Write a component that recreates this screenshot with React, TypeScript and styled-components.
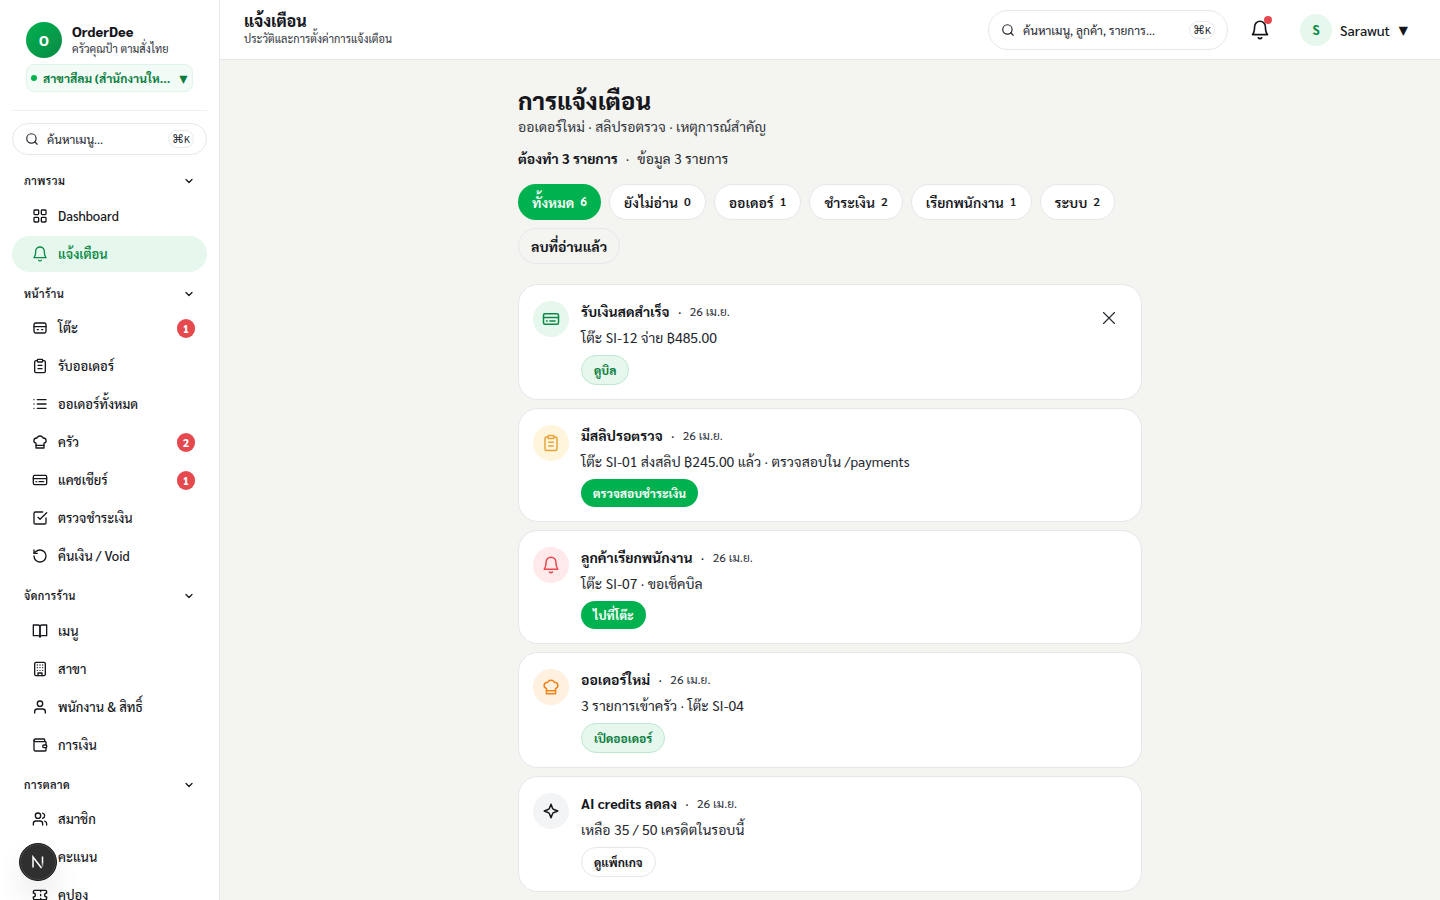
import React from "react";
import styled, { createGlobalStyle, css } from "styled-components";

const GlobalStyle = createGlobalStyle`
  *, *::before, *::after { box-sizing: border-box; }
  body {
    margin: 0;
    background: #f4f5f0;
    color: #15171c;
    font-family: Sarabun, "Noto Sans Thai Looped", "Noto Sans", sans-serif;
    font-size: 14px;
    overflow: hidden;
  }
  button { font: inherit; color: inherit; }
  h1, h2, p { margin: 0; }
`;

/* ---------- icons ---------- */

const iconPaths = {
  grid: (
    <>
      <rect x="3" y="3" width="7" height="7" rx="1.2" />
      <rect x="14" y="3" width="7" height="7" rx="1.2" />
      <rect x="14" y="14" width="7" height="7" rx="1.2" />
      <rect x="3" y="14" width="7" height="7" rx="1.2" />
    </>
  ),
  bell: (
    <>
      <path d="M5.500 8a6.500 6.500 0 0 1 13 0c0 6.500 2.500 9.500 2.500 9.500H3s2.500-3 2.500-9.500" />
      <path d="M10 21.300c.800 1.500 3.200 1.500 4 0" />
    </>
  ),
  table: (
    <>
      <rect x="3" y="4.5" width="18" height="15" rx="2.5" />
      <path d="M3 10h18M8 14.500h1.500M14.500 14.500H16" />
    </>
  ),
  clipboard: (
    <>
      <rect x="8" y="2" width="8" height="4" rx="1" />
      <path d="M16 4h2a2 2 0 0 1 2 2v14a2 2 0 0 1-2 2H6a2 2 0 0 1-2-2V6a2 2 0 0 1 2-2h2M9 11h6M9 16h6" />
    </>
  ),
  list: <path d="M8 5.500h13M8 12h13M8 18.500h13M3 5.500h.01M3 12h.01M3 18.500h.01" />,
  chef: (
    <>
      <path d="M6 13.870A4 4 0 0 1 7.410 6a5.110 5.110 0 0 1 1.050-1.540 5 5 0 0 1 7.080 0A5.110 5.110 0 0 1 16.590 6 4 4 0 0 1 18 13.870V21H6Z" />
      <path d="M6 17h12" />
    </>
  ),
  card: (
    <>
      <rect x="2" y="5" width="20" height="14" rx="2" />
      <path d="M2 10h20M6 14.500h1M10.500 14.500h7" />
    </>
  ),
  check: (
    <>
      <path d="m9 11 3 3L22 4" />
      <path d="M21 12v7a2 2 0 0 1-2 2H5a2 2 0 0 1-2-2V5a2 2 0 0 1 2-2h11" />
    </>
  ),
  undo: (
    <>
      <path d="M3 12a9 9 0 1 0 9-9 9.750 9.750 0 0 0-6.740 2.740L3 8" />
      <path d="M3 3v5h5" />
    </>
  ),
  book: (
    <>
      <path d="M2 3h7a3 3 0 0 1 3 3v15a3 3 0 0 0-3-2H2z" />
      <path d="M22 3h-7a3 3 0 0 0-3 3v15a3 3 0 0 1 3-2h7z" />
    </>
  ),
  building: (
    <>
      <rect x="4" y="2" width="16" height="20" rx="2" />
      <path d="M9 22v-4h6v4M8 6h.01M16 6h.01M12 6h.01M12 10h.01M12 14h.01M16 10h.01M16 14h.01M8 10h.01M8 14h.01" />
    </>
  ),
  user: (
    <>
      <path d="M20 21v-2a4 4 0 0 0-4-4H8a4 4 0 0 0-4 4v2" />
      <circle cx="12" cy="7" r="4" />
    </>
  ),
  wallet: (
    <>
      <path d="M19 7V4a1 1 0 0 0-1-1H5a2 2 0 0 0 0 4h15a1 1 0 0 1 1 1v4h-3a2 2 0 0 0 0 4h3a1 1 0 0 0 1-1v-2a1 1 0 0 0-1-1" />
      <path d="M3 5v14a2 2 0 0 0 2 2h15a1 1 0 0 0 1-1v-4" />
    </>
  ),
  users: (
    <>
      <path d="M16 21v-2a4 4 0 0 0-4-4H6a4 4 0 0 0-4 4v2M22 21v-2a4 4 0 0 0-3-3.870M16 3.130a4 4 0 0 1 0 7.750" />
      <circle cx="9" cy="7" r="4" />
    </>
  ),
  star: <path d="m12 2 3 6.500 6.500 1-4.800 4.600 1.200 6.700-5.900-3.200-5.900 3.200 1.200-6.700L2.500 9.500l6.500-1z" />,
  ticket: (
    <>
      <path d="M2 9a3 3 0 0 1 0 6v2a2 2 0 0 0 2 2h16a2 2 0 0 0 2-2v-2a3 3 0 0 1 0-6V7a2 2 0 0 0-2-2H4a2 2 0 0 0-2 2Z" />
      <path d="M13 5v2M13 17v2M13 11v2" />
    </>
  ),
  sparkle: (
    <path d="m12 3 1.900 5.100a3 3 0 0 0 2 2L21 12l-5.100 1.900a3 3 0 0 0-2 2L12 21l-1.900-5.100a3 3 0 0 0-2-2L3 12l5.100-1.900a3 3 0 0 0 2-2Z" />
  ),
  search: (
    <>
      <circle cx="11" cy="11" r="8" />
      <path d="m21 21-4.300-4.300" />
    </>
  ),
  chevron: <path d="m6 9 6 6 6-6" />,
  close: <path d="M18 6 6 18M6 6l12 12" />,
};

type IconName = keyof typeof iconPaths;

const IconSvg = styled.svg`
  display: block;
  flex: none;
  fill: none;
  stroke: currentColor;
  stroke-linecap: round;
  stroke-linejoin: round;
`;

function Icon({ name, size = 16, stroke = 2 }: { name: IconName; size?: number; stroke?: number }) {
  return (
    <IconSvg width={size} height={size} viewBox="0 0 24 24" strokeWidth={stroke} aria-hidden>
      {iconPaths[name]}
    </IconSvg>
  );
}

/* ---------- shell ---------- */

const Shell = styled.div`
  display: grid;
  grid-template-columns: 220px 1fr;
  height: 900px;
  overflow: hidden;
`;

const Sidebar = styled.aside`
  height: 900px;
  padding: 12px 12px 0;
  background: #fff;
  border-right: 1px solid #e5e7eb;
  overflow: hidden;
`;

const Brand = styled.div`
  padding: 10px 14px 18px;
  border-bottom: 1px solid #eff0f2;
`;

const BrandRow = styled.div`
  display: flex;
  align-items: center;
  gap: 10px;
`;

const BrandText = styled.div`
  padding-bottom: 2px;
`;

const Logo = styled.div`
  display: grid;
  place-items: center;
  width: 36px;
  height: 36px;
  border-radius: 50%;
  background: linear-gradient(135deg, #00b14f, #0a8a45);
  color: #fff;
  font-size: 14px;
  font-weight: 800;
`;

const BrandName = styled.div`
  font-size: 14px;
  font-weight: 800;
  line-height: 19px;
`;

const BrandSub = styled.div`
  font-size: 11px;
  line-height: 15px;
  color: #30343c;
`;

const Branch = styled.button`
  display: flex;
  align-items: center;
  width: 167px;
  height: 28px;
  margin-top: 6px;
  padding: 0 4px;
  border: 1px solid #e0f5e9;
  border-radius: 8px;
  background: #f2fbf6;
  color: #0a7d3e;
  font-size: 12px;
  font-weight: 700;
  white-space: nowrap;
`;

const BranchDot = styled.span`
  width: 6px;
  height: 6px;
  margin-right: 6px;
  border-radius: 50%;
  background: #00b14f;
`;

const BranchName = styled.span`
  flex: 1;
  text-align: left;
`;

const Caret = styled.span<{ $size: number }>`
  font-size: ${(p) => p.$size}px;
  font-weight: 400;
  line-height: 1;
`;

const SearchBox = styled.div<{ $top?: boolean }>`
  display: flex;
  align-items: center;
  gap: 8px;
  width: ${(p) => (p.$top ? "240px" : "100%")};
  height: ${(p) => (p.$top ? "40px" : "32px")};
  margin-top: ${(p) => (p.$top ? "0" : "12px")};
  padding: 0 12px;
  border: 1px solid #e5e7eb;
  border-radius: 20px;
  background: #fff;
  color: #24272e;
  font-size: 12px;
  white-space: nowrap;
`;

const SearchText = styled.span`
  flex: 1;
`;

const Keys = styled.kbd`
  display: inline-flex;
  align-items: center;
  justify-content: center;
  width: 26px;
  height: 18px;
  border: 1px solid #e8eaed;
  border-radius: 9px;
  font-family: inherit;
  font-size: 10px;
  line-height: 16px;
`;

const CommandGlyph = styled.span`
  font-family: "DejaVu Sans", sans-serif;
  font-size: 12px;
  line-height: 16px;
`;

const GroupHead = styled.div<{ $tall?: boolean }>`
  display: flex;
  align-items: center;
  justify-content: space-between;
  height: ${(p) => (p.$tall ? 39 : 38)}px;
  padding: ${(p) => (p.$tall ? 5 : 6)}px 12px 0;
  font-size: 11px;
  font-weight: 600;
  letter-spacing: 0.440px;
`;

const GroupTitle = styled.span`
  padding-bottom: 1px;
`;

const Groups = styled.div`
  margin-top: 4px;
`;

const NavList = styled.nav`
  display: flex;
  flex-direction: column;
  gap: 2px;
`;

const NavItem = styled.a<{ $active?: boolean }>`
  display: flex;
  align-items: center;
  gap: 10px;
  height: 36px;
  padding: 0 12px 0 20px;
  border-radius: 18px;
  font-size: 13px;
  font-weight: 500;
  ${(p) =>
    p.$active &&
    css`
      background: #e6f7ed;
      color: #0a8a45;
      font-weight: 600;
    `}
`;

const NavLabel = styled.span`
  flex: 1;
  padding-bottom: 1px;
`;

const Count = styled.span`
  display: grid;
  place-items: center;
  width: 18px;
  height: 19px;
  border-radius: 10px;
  background: #e5484d;
  color: #fff;
  font-size: 11px;
  font-weight: 800;
`;

/* ---------- top bar ---------- */

const Main = styled.div`
  min-width: 0;
`;

const TopBar = styled.header`
  display: flex;
  align-items: center;
  height: 60px;
  padding: 0 32px 0 24px;
  background: #fff;
  border-bottom: 1px solid #e5e7eb;
`;

const TopTitles = styled.div`
  flex: 1;
  padding-bottom: 2px;
`;

const TopTitle = styled.h2`
  font-size: 16px;
  font-weight: 800;
  line-height: 20px;
`;

const TopSub = styled.p`
  font-size: 11px;
  line-height: 16px;
  color: #30343c;
`;

const BellButton = styled.div`
  position: relative;
  display: grid;
  place-items: center;
  width: 40px;
  height: 40px;
  margin: 0 20px 0 12px;
`;

const BellDot = styled.span`
  position: absolute;
  top: 6px;
  right: 8px;
  width: 8px;
  height: 8px;
  border-radius: 50%;
  background: #e5484d;
`;

const Profile = styled.div`
  display: flex;
  align-items: center;
  gap: 8px;
  width: 108px;
  font-size: 14px;
  font-weight: 500;
`;

const Avatar = styled.div`
  display: grid;
  place-items: center;
  flex: none;
  width: 32px;
  height: 32px;
  border-radius: 50%;
  background: #e6f7ed;
  color: #0a8a45;
  font-size: 13px;
  font-weight: 700;
`;

/* ---------- content ---------- */

const Content = styled.main`
  width: 624px;
  margin: 0 auto;
  padding-top: 23px;
`;

const PageTitle = styled.h1`
  font-size: 24px;
  font-weight: 800;
  line-height: 34px;
`;

const PageSub = styled.p`
  font-size: 14px;
  line-height: 19px;
  color: #30343c;
`;

const Summary = styled.p`
  display: flex;
  gap: 8px;
  margin-top: 12px;
  line-height: 20px;
  color: #24272e;
  strong { color: #15171c; font-weight: 700; }
`;

const Chips = styled.div`
  display: flex;
  flex-wrap: wrap;
  gap: 8px;
  margin: 16px 0 20px;
`;

const Chip = styled.button<{ $kind?: "active" | "ghost" }>`
  display: flex;
  align-items: center;
  gap: 6px;
  height: 36px;
  padding: 0 14px;
  border: 1px solid #e5e7eb;
  border-radius: 18px;
  background: #fff;
  font-size: 14px;
  font-weight: 600;
  white-space: nowrap;
  ${(p) =>
    p.$kind === "active" &&
    css`
      border: 0;
      background: #00b14f;
      color: #fff;
    `}
  ${(p) =>
    p.$kind === "ghost" &&
    css`
      padding: 0 12px;
      background: transparent;
      font-weight: 700;
    `}
`;

const ChipCount = styled.span`
  padding-bottom: 2px;
  font-size: 12px;
`;

const Cards = styled.section`
  display: flex;
  flex-direction: column;
  gap: 8px;
`;

const Card = styled.article`
  display: flex;
  gap: 12px;
  padding: 14px;
  border: 1px solid #e5e7eb;
  border-radius: 20px;
  background: #fff;
`;

const tones = {
  green: ["#e6f7ed", "#0a8a45"],
  amber: ["#fff5dc", "#e5a53a"],
  red: ["#ffe9ea", "#e5484d"],
  orange: ["#fff0e0", "#f08418"],
  gray: ["#f3f4f6", "#15171c"],
};

const Badge = styled.div<{ $tone: keyof typeof tones }>`
  display: grid;
  place-items: center;
  width: 36px;
  height: 36px;
  margin-top: 2px;
  border-radius: 50%;
  background: ${(p) => tones[p.$tone][0]};
  color: ${(p) => tones[p.$tone][1]};
`;

const CardBody = styled.div`
  flex: 1;
`;

const CardHead = styled.div`
  display: flex;
  align-items: center;
  gap: 8.300px;
  height: 24px;
`;

const CardTitle = styled.span`
  font-size: 14px;
  font-weight: 700;
`;

const CardDate = styled.span`
  font-size: 12px;
  color: #30343c;
`;

const CardText = styled.p`
  margin: 3px 0 7px;
  line-height: 22px;
  color: #24272e;
`;

const Action = styled.button<{ $kind: "soft" | "solid" | "plain" }>`
  display: block;
  height: 30px;
  padding: 0 12px;
  border: 1px solid #e5e7eb;
  border-radius: 15px;
  background: #fff;
  font-size: 12px;
  font-weight: 700;
  ${(p) =>
    p.$kind === "soft" &&
    css`
      border-color: #bfe8d0;
      background: #e6f7ed;
      color: #0a7d3e;
    `}
  ${(p) =>
    p.$kind === "solid" &&
    css`
      height: 28px;
      border: 0;
      background: #00b14f;
      color: #fff;
    `}
`;

const CloseButton = styled.div`
  display: grid;
  place-items: center;
  width: 36px;
  height: 37px;
  color: #24272e;
`;

const DevBadge = styled.div`
  position: fixed;
  left: 19px;
  bottom: 19px;
  display: grid;
  place-items: center;
  width: 38px;
  height: 38px;
  border: 1px solid #171717;
  border-radius: 50%;
  background: #2f2f2f;
  box-shadow: inset 0 0 0 1px #4a4a4a, 0 16px 32px -8px rgba(0, 0, 0, 0.240);
`;

/* ---------- data ---------- */

type NavEntry = { icon: IconName; label: string; count?: number; active?: boolean };
type NavGroupData = { title: string; tall?: boolean; items: NavEntry[] };

const groups: NavGroupData[] = [
  {
    title: "ภาพรวม",
    tall: true,
    items: [
      { icon: "grid", label: "Dashboard" },
      { icon: "bell", label: "แจ้งเตือน", active: true },
    ],
  },
  {
    title: "หน้าร้าน",
    items: [
      { icon: "table", label: "โต๊ะ", count: 1 },
      { icon: "clipboard", label: "รับออเดอร์" },
      { icon: "list", label: "ออเดอร์ทั้งหมด" },
      { icon: "chef", label: "ครัว", count: 2 },
      { icon: "card", label: "แคชเชียร์", count: 1 },
      { icon: "check", label: "ตรวจชำระเงิน" },
      { icon: "undo", label: "คืนเงิน / Void" },
    ],
  },
  {
    title: "จัดการร้าน",
    tall: true,
    items: [
      { icon: "book", label: "เมนู" },
      { icon: "building", label: "สาขา" },
      { icon: "user", label: "พนักงาน & สิทธิ์" },
      { icon: "wallet", label: "การเงิน" },
    ],
  },
  {
    title: "การตลาด",
    items: [
      { icon: "users", label: "สมาชิก" },
      { icon: "star", label: "คะแนน" },
      { icon: "ticket", label: "คูปอง" },
    ],
  },
];

const filters = [
  { label: "ทั้งหมด", count: 6 },
  { label: "ยังไม่อ่าน", count: 0 },
  { label: "ออเดอร์", count: 1 },
  { label: "ชำระเงิน", count: 2 },
  { label: "เรียกพนักงาน", count: 1 },
  { label: "ระบบ", count: 2 },
];

type Notice = {
  icon: IconName;
  tone: keyof typeof tones;
  title: string;
  text: string;
  action: string;
  kind: "soft" | "solid" | "plain";
  closable?: boolean;
};

const notices: Notice[] = [
  { icon: "card", tone: "green", title: "รับเงินสดสำเร็จ", text: "โต๊ะ SI-12 จ่าย ฿485.00", action: "ดูบิล", kind: "soft", closable: true },
  { icon: "clipboard", tone: "amber", title: "มีสลิปรอตรวจ", text: "โต๊ะ SI-01 ส่งสลิป ฿245.00 แล้ว · ตรวจสอบใน /payments", action: "ตรวจสอบชำระเงิน", kind: "solid" },
  { icon: "bell", tone: "red", title: "ลูกค้าเรียกพนักงาน", text: "โต๊ะ SI-07 · ขอเช็คบิล", action: "ไปที่โต๊ะ", kind: "solid" },
  { icon: "chef", tone: "orange", title: "ออเดอร์ใหม่", text: "3 รายการเข้าครัว · โต๊ะ SI-04", action: "เปิดออเดอร์", kind: "soft" },
  { icon: "sparkle", tone: "gray", title: "AI credits ลดลง", text: "เหลือ 35 / 50 เครดิตในรอบนี้", action: "ดูแพ็กเกจ", kind: "plain" },
];

function NavGroup({ title, tall, items }: NavGroupData) {
  return (
    <>
      <GroupHead $tall={tall}>
        <GroupTitle>{title}</GroupTitle>
        <Icon name="chevron" size={12} stroke={2.500} />
      </GroupHead>
      <NavList>
        {items.map((item) => (
          <NavItem key={item.label} $active={item.active}>
            <Icon name={item.icon} />
            <NavLabel>{item.label}</NavLabel>
            {item.count !== undefined && <Count>{item.count}</Count>}
          </NavItem>
        ))}
      </NavList>
    </>
  );
}

function Shortcut() {
  return (
    <Keys>
      <CommandGlyph>⌘</CommandGlyph>K
    </Keys>
  );
}

export default function App() {
  return (
    <>
      <GlobalStyle />
      <Shell>
        <Sidebar>
          <Brand>
            <BrandRow>
              <Logo>O</Logo>
              <BrandText>
                <BrandName>OrderDee</BrandName>
                <BrandSub>ครัวคุณป้า ตามสั่งไทย</BrandSub>
              </BrandText>
            </BrandRow>
            <Branch>
              <BranchDot />
              <BranchName>สาขาสีลม (สำนักงานให...</BranchName>
              <Caret $size={14}>▼</Caret>
            </Branch>
          </Brand>
          <SearchBox>
            <Icon name="search" size={14} />
            <SearchText>ค้นหาเมนู...</SearchText>
            <Shortcut />
          </SearchBox>
          <Groups>
            {groups.map((g) => (
              <NavGroup key={g.title} {...g} />
            ))}
          </Groups>
        </Sidebar>
        <Main>
          <TopBar>
            <TopTitles>
              <TopTitle>แจ้งเตือน</TopTitle>
              <TopSub>ประวัติและการตั้งค่าการแจ้งเตือน</TopSub>
            </TopTitles>
            <SearchBox $top>
              <Icon name="search" size={14} />
              <SearchText>ค้นหาเมนู, ลูกค้า, รายการ...</SearchText>
              <Shortcut />
            </SearchBox>
            <BellButton>
              <Icon name="bell" size={20} />
              <BellDot />
            </BellButton>
            <Profile>
              <Avatar>S</Avatar>
              <span>Sarawut</span>
              <Caret $size={16}>▼</Caret>
            </Profile>
          </TopBar>
          <Content>
            <PageTitle>การแจ้งเตือน</PageTitle>
            <PageSub>ออเดอร์ใหม่ · สลิปรอตรวจ · เหตุการณ์สำคัญ</PageSub>
            <Summary>
              <strong>ต้องทำ 3 รายการ</strong>
              <span>·</span>
              <span>ข้อมูล 3 รายการ</span>
            </Summary>
            <Chips>
              {filters.map((f, i) => (
                <Chip key={f.label} $kind={i === 0 ? "active" : undefined}>
                  {f.label}
                  <ChipCount>{f.count}</ChipCount>
                </Chip>
              ))}
              <Chip $kind="ghost">ลบที่อ่านแล้ว</Chip>
            </Chips>
            <Cards>
              {notices.map((n) => (
                <Card key={n.title}>
                  <Badge $tone={n.tone}>
                    <Icon name={n.icon} size={18} />
                  </Badge>
                  <CardBody>
                    <CardHead>
                      <CardTitle>{n.title}</CardTitle>
                      <span>·</span>
                      <CardDate>26 เม.ย.</CardDate>
                    </CardHead>
                    <CardText>{n.text}</CardText>
                    <Action $kind={n.kind}>{n.action}</Action>
                  </CardBody>
                  {n.closable && (
                    <CloseButton>
                      <Icon name="close" size={22} stroke={1.200} />
                    </CloseButton>
                  )}
                </Card>
              ))}
            </Cards>
          </Content>
        </Main>
      </Shell>
      <DevBadge>
        <svg width="14" height="14" viewBox="0 0 14 14" fill="none">
          <defs>
            <linearGradient id="fadeRight" x1="0" y1="0" x2="0" y2="14" gradientUnits="userSpaceOnUse">
              <stop offset="0.500" stopColor="#fff" />
              <stop offset="0.900" stopColor="#fff" stopOpacity="0.100" />
            </linearGradient>
          </defs>
          <path d="M2 12.500V2l8.500 11" stroke="#fff" strokeWidth="1.500" />
          <path d="M11.500 1.500v11" stroke="url(#fadeRight)" strokeWidth="1.500" />
        </svg>
      </DevBadge>
    </>
  );
}
